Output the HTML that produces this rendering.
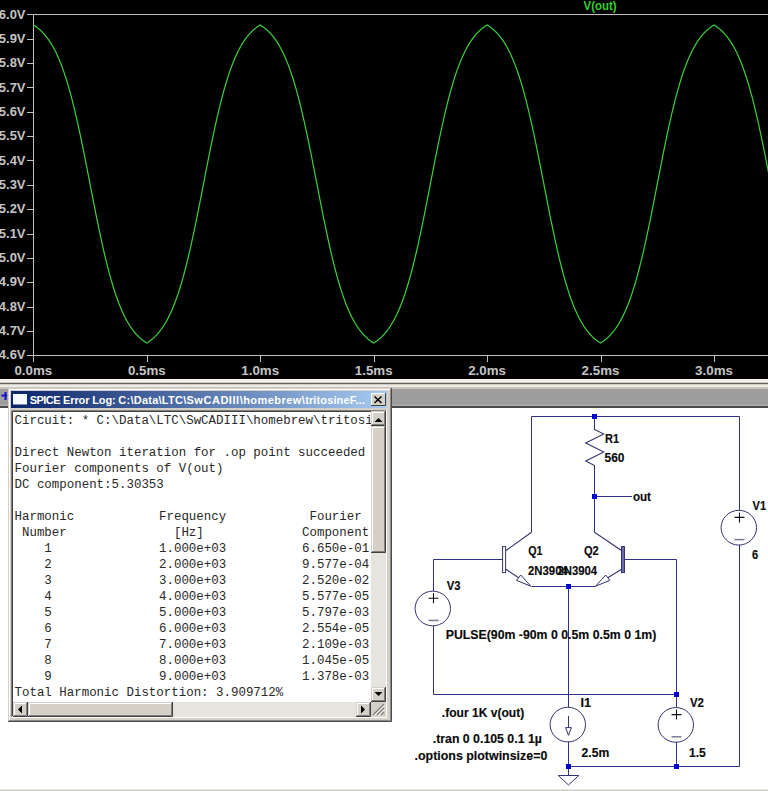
<!DOCTYPE html>
<html><head><meta charset="utf-8">
<style>
html,body{margin:0;padding:0;width:768px;height:791px;overflow:hidden;background:#fff;}
svg{position:absolute;left:0;top:0;}
.ax{font-family:"Liberation Sans",sans-serif;font-weight:bold;font-size:13.6px;fill:#c4c4c4;}
.vout{font-family:"Liberation Sans",sans-serif;font-weight:bold;font-size:13.5px;fill:#30d030;}
.sl{font-family:"Liberation Sans",sans-serif;font-weight:bold;font-size:12.5px;fill:#0a0a0a;stroke:#0a0a0a;stroke-width:0.15px;}
.tt{font-family:"Liberation Sans",sans-serif;font-weight:bold;font-size:11px;fill:#fff;}
.mono{font-family:"Liberation Mono",monospace;font-size:12.45px;fill:#282828;white-space:pre;}
</style></head><body>
<svg width="768" height="791" viewBox="0 0 768 791">
<rect x="0" y="0" width="768" height="379" fill="#000"/>
<path d="M33.5 14.5 H768 M33.5 14.5 V362 M27 355.5 H768" stroke="#c0c0c0" stroke-width="1" fill="none"/>
<path d="M27 14.5 H33" stroke="#c0c0c0" stroke-width="1"/>
<text transform="translate(25.5 18.5) scale(0.955 1)" text-anchor="end" class="ax">6.0V</text>
<path d="M27 39.5 H33" stroke="#c0c0c0" stroke-width="1"/>
<text transform="translate(25.5 42.9) scale(0.955 1)" text-anchor="end" class="ax">5.9V</text>
<path d="M27 63.5 H33" stroke="#c0c0c0" stroke-width="1"/>
<text transform="translate(25.5 67.2) scale(0.955 1)" text-anchor="end" class="ax">5.8V</text>
<path d="M27 87.5 H33" stroke="#c0c0c0" stroke-width="1"/>
<text transform="translate(25.5 91.6) scale(0.955 1)" text-anchor="end" class="ax">5.7V</text>
<path d="M27 112.5 H33" stroke="#c0c0c0" stroke-width="1"/>
<text transform="translate(25.5 115.9) scale(0.955 1)" text-anchor="end" class="ax">5.6V</text>
<path d="M27 136.5 H33" stroke="#c0c0c0" stroke-width="1"/>
<text transform="translate(25.5 140.2) scale(0.955 1)" text-anchor="end" class="ax">5.5V</text>
<path d="M27 160.5 H33" stroke="#c0c0c0" stroke-width="1"/>
<text transform="translate(25.5 164.6) scale(0.955 1)" text-anchor="end" class="ax">5.4V</text>
<path d="M27 185.5 H33" stroke="#c0c0c0" stroke-width="1"/>
<text transform="translate(25.5 188.9) scale(0.955 1)" text-anchor="end" class="ax">5.3V</text>
<path d="M27 209.5 H33" stroke="#c0c0c0" stroke-width="1"/>
<text transform="translate(25.5 213.3) scale(0.955 1)" text-anchor="end" class="ax">5.2V</text>
<path d="M27 234.5 H33" stroke="#c0c0c0" stroke-width="1"/>
<text transform="translate(25.5 237.6) scale(0.955 1)" text-anchor="end" class="ax">5.1V</text>
<path d="M27 258.5 H33" stroke="#c0c0c0" stroke-width="1"/>
<text transform="translate(25.5 262.0) scale(0.955 1)" text-anchor="end" class="ax">5.0V</text>
<path d="M27 282.5 H33" stroke="#c0c0c0" stroke-width="1"/>
<text transform="translate(25.5 286.3) scale(0.955 1)" text-anchor="end" class="ax">4.9V</text>
<path d="M27 307.5 H33" stroke="#c0c0c0" stroke-width="1"/>
<text transform="translate(25.5 310.6) scale(0.955 1)" text-anchor="end" class="ax">4.8V</text>
<path d="M27 331.5 H33" stroke="#c0c0c0" stroke-width="1"/>
<text transform="translate(25.5 335.0) scale(0.955 1)" text-anchor="end" class="ax">4.7V</text>
<path d="M27 355.5 H33" stroke="#c0c0c0" stroke-width="1"/>
<text transform="translate(25.5 359.3) scale(0.955 1)" text-anchor="end" class="ax">4.6V</text>
<path d="M33.5 355 V362" stroke="#c0c0c0" stroke-width="1"/>
<text transform="translate(33.3 374.6) scale(0.98 1)" text-anchor="middle" class="ax">0.0ms</text>
<path d="M147.5 355 V362" stroke="#c0c0c0" stroke-width="1"/>
<text transform="translate(146.8 374.6) scale(0.98 1)" text-anchor="middle" class="ax">0.5ms</text>
<path d="M260.5 355 V362" stroke="#c0c0c0" stroke-width="1"/>
<text transform="translate(260.2 374.6) scale(0.98 1)" text-anchor="middle" class="ax">1.0ms</text>
<path d="M374.5 355 V362" stroke="#c0c0c0" stroke-width="1"/>
<text transform="translate(373.7 374.6) scale(0.98 1)" text-anchor="middle" class="ax">1.5ms</text>
<path d="M487.5 355 V362" stroke="#c0c0c0" stroke-width="1"/>
<text transform="translate(487.1 374.6) scale(0.98 1)" text-anchor="middle" class="ax">2.0ms</text>
<path d="M601.5 355 V362" stroke="#c0c0c0" stroke-width="1"/>
<text transform="translate(600.5 374.6) scale(0.98 1)" text-anchor="middle" class="ax">2.5ms</text>
<path d="M714.5 355 V362" stroke="#c0c0c0" stroke-width="1"/>
<text transform="translate(714.0 374.6) scale(0.98 1)" text-anchor="middle" class="ax">3.0ms</text>
<path d="M33.30 24.92 L33.75 25.21 L34.21 25.50 L34.66 25.80 L35.12 26.10 L35.57 26.42 L36.02 26.74 L36.48 27.07 L36.93 27.41 L37.38 27.76 L37.84 28.11 L38.29 28.48 L38.75 28.85 L39.20 29.24 L39.65 29.63 L40.11 30.04 L40.56 30.45 L41.01 30.88 L41.47 31.32 L41.92 31.76 L42.38 32.22 L42.83 32.69 L43.28 33.17 L43.74 33.67 L44.19 34.17 L44.65 34.69 L45.10 35.22 L45.55 35.77 L46.01 36.33 L46.46 36.90 L46.91 37.48 L47.37 38.08 L47.82 38.69 L48.28 39.32 L48.73 39.96 L49.18 40.62 L49.64 41.30 L50.09 41.99 L50.54 42.69 L51.00 43.41 L51.45 44.15 L51.91 44.91 L52.36 45.68 L52.81 46.47 L53.27 47.28 L53.72 48.11 L54.17 48.95 L54.63 49.81 L55.08 50.70 L55.54 51.60 L55.99 52.52 L56.44 53.46 L56.90 54.42 L57.35 55.41 L57.81 56.41 L58.26 57.43 L58.71 58.48 L59.17 59.55 L59.62 60.64 L60.07 61.75 L60.53 62.88 L60.98 64.04 L61.44 65.21 L61.89 66.42 L62.34 67.64 L62.80 68.89 L63.25 70.16 L63.70 71.46 L64.16 72.77 L64.61 74.12 L65.07 75.49 L65.52 76.88 L65.97 78.29 L66.43 79.73 L66.88 81.20 L67.34 82.69 L67.79 84.21 L68.24 85.75 L68.70 87.31 L69.15 88.90 L69.60 90.51 L70.06 92.15 L70.51 93.82 L70.97 95.50 L71.42 97.22 L71.87 98.95 L72.33 100.71 L72.78 102.50 L73.23 104.31 L73.69 106.14 L74.14 108.00 L74.60 109.88 L75.05 111.78 L75.50 113.70 L75.96 115.65 L76.41 117.62 L76.86 119.60 L77.32 121.61 L77.77 123.65 L78.23 125.70 L78.68 127.77 L79.13 129.86 L79.59 131.96 L80.04 134.09 L80.50 136.23 L80.95 138.39 L81.40 140.57 L81.86 142.76 L82.31 144.96 L82.76 147.18 L83.22 149.42 L83.67 151.66 L84.13 153.92 L84.58 156.19 L85.03 158.47 L85.49 160.76 L85.94 163.05 L86.39 165.36 L86.85 167.67 L87.30 169.99 L87.76 172.31 L88.21 174.64 L88.66 176.97 L89.12 179.31 L89.57 181.64 L90.03 183.98 L90.48 186.31 L90.93 188.65 L91.39 190.98 L91.84 193.32 L92.29 195.64 L92.75 197.97 L93.20 200.28 L93.66 202.60 L94.11 204.90 L94.56 207.20 L95.02 209.49 L95.47 211.77 L95.92 214.04 L96.38 216.29 L96.83 218.54 L97.29 220.77 L97.74 222.99 L98.19 225.20 L98.65 227.39 L99.10 229.56 L99.55 231.72 L100.01 233.87 L100.46 235.99 L100.92 238.10 L101.37 240.19 L101.82 242.26 L102.28 244.31 L102.73 246.34 L103.19 248.35 L103.64 250.34 L104.09 252.31 L104.55 254.26 L105.00 256.18 L105.45 258.08 L105.91 259.96 L106.36 261.82 L106.82 263.65 L107.27 265.46 L107.72 267.24 L108.18 269.00 L108.63 270.74 L109.08 272.45 L109.54 274.14 L109.99 275.80 L110.45 277.44 L110.90 279.06 L111.35 280.65 L111.81 282.21 L112.26 283.75 L112.72 285.27 L113.17 286.76 L113.62 288.22 L114.08 289.66 L114.53 291.08 L114.98 292.47 L115.44 293.84 L115.89 295.18 L116.35 296.50 L116.80 297.80 L117.25 299.07 L117.71 300.32 L118.16 301.54 L118.61 302.74 L119.07 303.92 L119.52 305.08 L119.98 306.21 L120.43 307.32 L120.88 308.41 L121.34 309.48 L121.79 310.52 L122.24 311.55 L122.70 312.55 L123.15 313.53 L123.61 314.49 L124.06 315.43 L124.51 316.36 L124.97 317.26 L125.42 318.14 L125.88 319.01 L126.33 319.85 L126.78 320.68 L127.24 321.49 L127.69 322.28 L128.14 323.05 L128.60 323.80 L129.05 324.54 L129.51 325.27 L129.96 325.97 L130.41 326.66 L130.87 327.33 L131.32 327.99 L131.77 328.63 L132.23 329.26 L132.68 329.88 L133.14 330.47 L133.59 331.06 L134.04 331.63 L134.50 332.19 L134.95 332.73 L135.41 333.26 L135.86 333.78 L136.31 334.29 L136.77 334.78 L137.22 335.26 L137.67 335.73 L138.13 336.19 L138.58 336.64 L139.04 337.08 L139.49 337.50 L139.94 337.92 L140.40 338.32 L140.85 338.72 L141.30 339.10 L141.76 339.48 L142.21 339.84 L142.67 340.20 L143.12 340.55 L143.57 340.89 L144.03 341.22 L144.48 341.54 L144.93 341.85 L145.39 342.16 L145.84 342.46 L146.30 342.75 L146.75 343.03 L147.20 342.75 L147.66 342.46 L148.11 342.16 L148.57 341.85 L149.02 341.54 L149.47 341.22 L149.93 340.89 L150.38 340.55 L150.83 340.20 L151.29 339.84 L151.74 339.48 L152.20 339.10 L152.65 338.72 L153.10 338.32 L153.56 337.92 L154.01 337.50 L154.46 337.08 L154.92 336.64 L155.37 336.19 L155.83 335.73 L156.28 335.26 L156.73 334.78 L157.19 334.29 L157.64 333.78 L158.10 333.26 L158.55 332.73 L159.00 332.19 L159.46 331.63 L159.91 331.06 L160.36 330.47 L160.82 329.88 L161.27 329.26 L161.73 328.63 L162.18 327.99 L162.63 327.33 L163.09 326.66 L163.54 325.97 L163.99 325.27 L164.45 324.54 L164.90 323.80 L165.36 323.05 L165.81 322.28 L166.26 321.49 L166.72 320.68 L167.17 319.85 L167.62 319.01 L168.08 318.14 L168.53 317.26 L168.99 316.36 L169.44 315.43 L169.89 314.49 L170.35 313.53 L170.80 312.55 L171.26 311.55 L171.71 310.52 L172.16 309.48 L172.62 308.41 L173.07 307.32 L173.52 306.21 L173.98 305.08 L174.43 303.92 L174.89 302.74 L175.34 301.54 L175.79 300.32 L176.25 299.07 L176.70 297.80 L177.15 296.50 L177.61 295.18 L178.06 293.84 L178.52 292.47 L178.97 291.08 L179.42 289.66 L179.88 288.22 L180.33 286.76 L180.79 285.27 L181.24 283.75 L181.69 282.21 L182.15 280.65 L182.60 279.06 L183.05 277.44 L183.51 275.80 L183.96 274.14 L184.42 272.45 L184.87 270.74 L185.32 269.00 L185.78 267.24 L186.23 265.46 L186.68 263.65 L187.14 261.82 L187.59 259.96 L188.05 258.08 L188.50 256.18 L188.95 254.26 L189.41 252.31 L189.86 250.34 L190.31 248.35 L190.77 246.34 L191.22 244.31 L191.68 242.26 L192.13 240.19 L192.58 238.10 L193.04 235.99 L193.49 233.87 L193.95 231.72 L194.40 229.56 L194.85 227.39 L195.31 225.20 L195.76 222.99 L196.21 220.77 L196.67 218.54 L197.12 216.29 L197.58 214.04 L198.03 211.77 L198.48 209.49 L198.94 207.20 L199.39 204.90 L199.84 202.60 L200.30 200.28 L200.75 197.97 L201.21 195.64 L201.66 193.32 L202.11 190.98 L202.57 188.65 L203.02 186.31 L203.48 183.98 L203.93 181.64 L204.38 179.31 L204.84 176.97 L205.29 174.64 L205.74 172.31 L206.20 169.99 L206.65 167.67 L207.11 165.36 L207.56 163.05 L208.01 160.76 L208.47 158.47 L208.92 156.19 L209.37 153.92 L209.83 151.66 L210.28 149.42 L210.74 147.18 L211.19 144.96 L211.64 142.76 L212.10 140.57 L212.55 138.39 L213.00 136.23 L213.46 134.09 L213.91 131.96 L214.37 129.86 L214.82 127.77 L215.27 125.70 L215.73 123.65 L216.18 121.61 L216.64 119.60 L217.09 117.62 L217.54 115.65 L218.00 113.70 L218.45 111.78 L218.90 109.88 L219.36 108.00 L219.81 106.14 L220.27 104.31 L220.72 102.50 L221.17 100.71 L221.63 98.95 L222.08 97.22 L222.53 95.50 L222.99 93.82 L223.44 92.15 L223.90 90.51 L224.35 88.90 L224.80 87.31 L225.26 85.75 L225.71 84.21 L226.17 82.69 L226.62 81.20 L227.07 79.73 L227.53 78.29 L227.98 76.88 L228.43 75.49 L228.89 74.12 L229.34 72.77 L229.80 71.46 L230.25 70.16 L230.70 68.89 L231.16 67.64 L231.61 66.42 L232.06 65.21 L232.52 64.04 L232.97 62.88 L233.43 61.75 L233.88 60.64 L234.33 59.55 L234.79 58.48 L235.24 57.43 L235.69 56.41 L236.15 55.41 L236.60 54.42 L237.06 53.46 L237.51 52.52 L237.96 51.60 L238.42 50.70 L238.87 49.81 L239.33 48.95 L239.78 48.11 L240.23 47.28 L240.69 46.47 L241.14 45.68 L241.59 44.91 L242.05 44.15 L242.50 43.41 L242.96 42.69 L243.41 41.99 L243.86 41.30 L244.32 40.62 L244.77 39.96 L245.22 39.32 L245.68 38.69 L246.13 38.08 L246.59 37.48 L247.04 36.90 L247.49 36.33 L247.95 35.77 L248.40 35.22 L248.86 34.69 L249.31 34.17 L249.76 33.67 L250.22 33.17 L250.67 32.69 L251.12 32.22 L251.58 31.76 L252.03 31.32 L252.49 30.88 L252.94 30.45 L253.39 30.04 L253.85 29.63 L254.30 29.24 L254.75 28.85 L255.21 28.48 L255.66 28.11 L256.12 27.76 L256.57 27.41 L257.02 27.07 L257.48 26.74 L257.93 26.42 L258.38 26.10 L258.84 25.80 L259.29 25.50 L259.75 25.21 L260.20 24.92 L260.65 25.21 L261.11 25.50 L261.56 25.80 L262.02 26.10 L262.47 26.42 L262.92 26.74 L263.38 27.07 L263.83 27.41 L264.28 27.76 L264.74 28.11 L265.19 28.48 L265.65 28.85 L266.10 29.24 L266.55 29.63 L267.01 30.04 L267.46 30.45 L267.91 30.88 L268.37 31.32 L268.82 31.76 L269.28 32.22 L269.73 32.69 L270.18 33.17 L270.64 33.67 L271.09 34.17 L271.55 34.69 L272.00 35.22 L272.45 35.77 L272.91 36.33 L273.36 36.90 L273.81 37.48 L274.27 38.08 L274.72 38.69 L275.18 39.32 L275.63 39.96 L276.08 40.62 L276.54 41.30 L276.99 41.99 L277.44 42.69 L277.90 43.41 L278.35 44.15 L278.81 44.91 L279.26 45.68 L279.71 46.47 L280.17 47.28 L280.62 48.11 L281.07 48.95 L281.53 49.81 L281.98 50.70 L282.44 51.60 L282.89 52.52 L283.34 53.46 L283.80 54.42 L284.25 55.41 L284.71 56.41 L285.16 57.43 L285.61 58.48 L286.07 59.55 L286.52 60.64 L286.97 61.75 L287.43 62.88 L287.88 64.04 L288.34 65.21 L288.79 66.42 L289.24 67.64 L289.70 68.89 L290.15 70.16 L290.60 71.46 L291.06 72.77 L291.51 74.12 L291.97 75.49 L292.42 76.88 L292.87 78.29 L293.33 79.73 L293.78 81.20 L294.24 82.69 L294.69 84.21 L295.14 85.75 L295.60 87.31 L296.05 88.90 L296.50 90.51 L296.96 92.15 L297.41 93.82 L297.87 95.50 L298.32 97.22 L298.77 98.95 L299.23 100.71 L299.68 102.50 L300.13 104.31 L300.59 106.14 L301.04 108.00 L301.50 109.88 L301.95 111.78 L302.40 113.70 L302.86 115.65 L303.31 117.62 L303.76 119.60 L304.22 121.61 L304.67 123.65 L305.13 125.70 L305.58 127.77 L306.03 129.86 L306.49 131.96 L306.94 134.09 L307.40 136.23 L307.85 138.39 L308.30 140.57 L308.76 142.76 L309.21 144.96 L309.66 147.18 L310.12 149.42 L310.57 151.66 L311.03 153.92 L311.48 156.19 L311.93 158.47 L312.39 160.76 L312.84 163.05 L313.29 165.36 L313.75 167.67 L314.20 169.99 L314.66 172.31 L315.11 174.64 L315.56 176.97 L316.02 179.31 L316.47 181.64 L316.93 183.98 L317.38 186.31 L317.83 188.65 L318.29 190.98 L318.74 193.32 L319.19 195.64 L319.65 197.97 L320.10 200.28 L320.56 202.60 L321.01 204.90 L321.46 207.20 L321.92 209.49 L322.37 211.77 L322.82 214.04 L323.28 216.29 L323.73 218.54 L324.19 220.77 L324.64 222.99 L325.09 225.20 L325.55 227.39 L326.00 229.56 L326.45 231.72 L326.91 233.87 L327.36 235.99 L327.82 238.10 L328.27 240.19 L328.72 242.26 L329.18 244.31 L329.63 246.34 L330.09 248.35 L330.54 250.34 L330.99 252.31 L331.45 254.26 L331.90 256.18 L332.35 258.08 L332.81 259.96 L333.26 261.82 L333.72 263.65 L334.17 265.46 L334.62 267.24 L335.08 269.00 L335.53 270.74 L335.98 272.45 L336.44 274.14 L336.89 275.80 L337.35 277.44 L337.80 279.06 L338.25 280.65 L338.71 282.21 L339.16 283.75 L339.62 285.27 L340.07 286.76 L340.52 288.22 L340.98 289.66 L341.43 291.08 L341.88 292.47 L342.34 293.84 L342.79 295.18 L343.25 296.50 L343.70 297.80 L344.15 299.07 L344.61 300.32 L345.06 301.54 L345.51 302.74 L345.97 303.92 L346.42 305.08 L346.88 306.21 L347.33 307.32 L347.78 308.41 L348.24 309.48 L348.69 310.52 L349.14 311.55 L349.60 312.55 L350.05 313.53 L350.51 314.49 L350.96 315.43 L351.41 316.36 L351.87 317.26 L352.32 318.14 L352.78 319.01 L353.23 319.85 L353.68 320.68 L354.14 321.49 L354.59 322.28 L355.04 323.05 L355.50 323.80 L355.95 324.54 L356.41 325.27 L356.86 325.97 L357.31 326.66 L357.77 327.33 L358.22 327.99 L358.67 328.63 L359.13 329.26 L359.58 329.88 L360.04 330.47 L360.49 331.06 L360.94 331.63 L361.40 332.19 L361.85 332.73 L362.31 333.26 L362.76 333.78 L363.21 334.29 L363.67 334.78 L364.12 335.26 L364.57 335.73 L365.03 336.19 L365.48 336.64 L365.94 337.08 L366.39 337.50 L366.84 337.92 L367.30 338.32 L367.75 338.72 L368.20 339.10 L368.66 339.48 L369.11 339.84 L369.57 340.20 L370.02 340.55 L370.47 340.89 L370.93 341.22 L371.38 341.54 L371.83 341.85 L372.29 342.16 L372.74 342.46 L373.20 342.75 L373.65 343.03 L374.10 342.75 L374.56 342.46 L375.01 342.16 L375.47 341.85 L375.92 341.54 L376.37 341.22 L376.83 340.89 L377.28 340.55 L377.73 340.20 L378.19 339.84 L378.64 339.48 L379.10 339.10 L379.55 338.72 L380.00 338.32 L380.46 337.92 L380.91 337.50 L381.36 337.08 L381.82 336.64 L382.27 336.19 L382.73 335.73 L383.18 335.26 L383.63 334.78 L384.09 334.29 L384.54 333.78 L385.00 333.26 L385.45 332.73 L385.90 332.19 L386.36 331.63 L386.81 331.06 L387.26 330.47 L387.72 329.88 L388.17 329.26 L388.63 328.63 L389.08 327.99 L389.53 327.33 L389.99 326.66 L390.44 325.97 L390.89 325.27 L391.35 324.54 L391.80 323.80 L392.26 323.05 L392.71 322.28 L393.16 321.49 L393.62 320.68 L394.07 319.85 L394.52 319.01 L394.98 318.14 L395.43 317.26 L395.89 316.36 L396.34 315.43 L396.79 314.49 L397.25 313.53 L397.70 312.55 L398.16 311.55 L398.61 310.52 L399.06 309.48 L399.52 308.41 L399.97 307.32 L400.42 306.21 L400.88 305.08 L401.33 303.92 L401.79 302.74 L402.24 301.54 L402.69 300.32 L403.15 299.07 L403.60 297.80 L404.05 296.50 L404.51 295.18 L404.96 293.84 L405.42 292.47 L405.87 291.08 L406.32 289.66 L406.78 288.22 L407.23 286.76 L407.69 285.27 L408.14 283.75 L408.59 282.21 L409.05 280.65 L409.50 279.06 L409.95 277.44 L410.41 275.80 L410.86 274.14 L411.32 272.45 L411.77 270.74 L412.22 269.00 L412.68 267.24 L413.13 265.46 L413.58 263.65 L414.04 261.82 L414.49 259.96 L414.95 258.08 L415.40 256.18 L415.85 254.26 L416.31 252.31 L416.76 250.34 L417.21 248.35 L417.67 246.34 L418.12 244.31 L418.58 242.26 L419.03 240.19 L419.48 238.10 L419.94 235.99 L420.39 233.87 L420.85 231.72 L421.30 229.56 L421.75 227.39 L422.21 225.20 L422.66 222.99 L423.11 220.77 L423.57 218.54 L424.02 216.29 L424.48 214.04 L424.93 211.77 L425.38 209.49 L425.84 207.20 L426.29 204.90 L426.74 202.60 L427.20 200.28 L427.65 197.97 L428.11 195.64 L428.56 193.32 L429.01 190.98 L429.47 188.65 L429.92 186.31 L430.38 183.98 L430.83 181.64 L431.28 179.31 L431.74 176.97 L432.19 174.64 L432.64 172.31 L433.10 169.99 L433.55 167.67 L434.01 165.36 L434.46 163.05 L434.91 160.76 L435.37 158.47 L435.82 156.19 L436.27 153.92 L436.73 151.66 L437.18 149.42 L437.64 147.18 L438.09 144.96 L438.54 142.76 L439.00 140.57 L439.45 138.39 L439.90 136.23 L440.36 134.09 L440.81 131.96 L441.27 129.86 L441.72 127.77 L442.17 125.70 L442.63 123.65 L443.08 121.61 L443.54 119.60 L443.99 117.62 L444.44 115.65 L444.90 113.70 L445.35 111.78 L445.80 109.88 L446.26 108.00 L446.71 106.14 L447.17 104.31 L447.62 102.50 L448.07 100.71 L448.53 98.95 L448.98 97.22 L449.43 95.50 L449.89 93.82 L450.34 92.15 L450.80 90.51 L451.25 88.90 L451.70 87.31 L452.16 85.75 L452.61 84.21 L453.07 82.69 L453.52 81.20 L453.97 79.73 L454.43 78.29 L454.88 76.88 L455.33 75.49 L455.79 74.12 L456.24 72.77 L456.70 71.46 L457.15 70.16 L457.60 68.89 L458.06 67.64 L458.51 66.42 L458.96 65.21 L459.42 64.04 L459.87 62.88 L460.33 61.75 L460.78 60.64 L461.23 59.55 L461.69 58.48 L462.14 57.43 L462.59 56.41 L463.05 55.41 L463.50 54.42 L463.96 53.46 L464.41 52.52 L464.86 51.60 L465.32 50.70 L465.77 49.81 L466.23 48.95 L466.68 48.11 L467.13 47.28 L467.59 46.47 L468.04 45.68 L468.49 44.91 L468.95 44.15 L469.40 43.41 L469.86 42.69 L470.31 41.99 L470.76 41.30 L471.22 40.62 L471.67 39.96 L472.12 39.32 L472.58 38.69 L473.03 38.08 L473.49 37.48 L473.94 36.90 L474.39 36.33 L474.85 35.77 L475.30 35.22 L475.76 34.69 L476.21 34.17 L476.66 33.67 L477.12 33.17 L477.57 32.69 L478.02 32.22 L478.48 31.76 L478.93 31.32 L479.39 30.88 L479.84 30.45 L480.29 30.04 L480.75 29.63 L481.20 29.24 L481.65 28.85 L482.11 28.48 L482.56 28.11 L483.02 27.76 L483.47 27.41 L483.92 27.07 L484.38 26.74 L484.83 26.42 L485.28 26.10 L485.74 25.80 L486.19 25.50 L486.65 25.21 L487.10 24.92 L487.55 25.21 L488.01 25.50 L488.46 25.80 L488.92 26.10 L489.37 26.42 L489.82 26.74 L490.28 27.07 L490.73 27.41 L491.18 27.76 L491.64 28.11 L492.09 28.48 L492.55 28.85 L493.00 29.24 L493.45 29.63 L493.91 30.04 L494.36 30.45 L494.81 30.88 L495.27 31.32 L495.72 31.76 L496.18 32.22 L496.63 32.69 L497.08 33.17 L497.54 33.67 L497.99 34.17 L498.44 34.69 L498.90 35.22 L499.35 35.77 L499.81 36.33 L500.26 36.90 L500.71 37.48 L501.17 38.08 L501.62 38.69 L502.08 39.32 L502.53 39.96 L502.98 40.62 L503.44 41.30 L503.89 41.99 L504.34 42.69 L504.80 43.41 L505.25 44.15 L505.71 44.91 L506.16 45.68 L506.61 46.47 L507.07 47.28 L507.52 48.11 L507.97 48.95 L508.43 49.81 L508.88 50.70 L509.34 51.60 L509.79 52.52 L510.24 53.46 L510.70 54.42 L511.15 55.41 L511.61 56.41 L512.06 57.43 L512.51 58.48 L512.97 59.55 L513.42 60.64 L513.87 61.75 L514.33 62.88 L514.78 64.04 L515.24 65.21 L515.69 66.42 L516.14 67.64 L516.60 68.89 L517.05 70.16 L517.50 71.46 L517.96 72.77 L518.41 74.12 L518.87 75.49 L519.32 76.88 L519.77 78.29 L520.23 79.73 L520.68 81.20 L521.13 82.69 L521.59 84.21 L522.04 85.75 L522.50 87.31 L522.95 88.90 L523.40 90.51 L523.86 92.15 L524.31 93.82 L524.77 95.50 L525.22 97.22 L525.67 98.95 L526.13 100.71 L526.58 102.50 L527.03 104.31 L527.49 106.14 L527.94 108.00 L528.40 109.88 L528.85 111.78 L529.30 113.70 L529.76 115.65 L530.21 117.62 L530.66 119.60 L531.12 121.61 L531.57 123.65 L532.03 125.70 L532.48 127.77 L532.93 129.86 L533.39 131.96 L533.84 134.09 L534.30 136.23 L534.75 138.39 L535.20 140.57 L535.66 142.76 L536.11 144.96 L536.56 147.18 L537.02 149.42 L537.47 151.66 L537.93 153.92 L538.38 156.19 L538.83 158.47 L539.29 160.76 L539.74 163.05 L540.19 165.36 L540.65 167.67 L541.10 169.99 L541.56 172.31 L542.01 174.64 L542.46 176.97 L542.92 179.31 L543.37 181.64 L543.82 183.98 L544.28 186.31 L544.73 188.65 L545.19 190.98 L545.64 193.32 L546.09 195.64 L546.55 197.97 L547.00 200.28 L547.46 202.60 L547.91 204.90 L548.36 207.20 L548.82 209.49 L549.27 211.77 L549.72 214.04 L550.18 216.29 L550.63 218.54 L551.09 220.77 L551.54 222.99 L551.99 225.20 L552.45 227.39 L552.90 229.56 L553.35 231.72 L553.81 233.87 L554.26 235.99 L554.72 238.10 L555.17 240.19 L555.62 242.26 L556.08 244.31 L556.53 246.34 L556.99 248.35 L557.44 250.34 L557.89 252.31 L558.35 254.26 L558.80 256.18 L559.25 258.08 L559.71 259.96 L560.16 261.82 L560.62 263.65 L561.07 265.46 L561.52 267.24 L561.98 269.00 L562.43 270.74 L562.88 272.45 L563.34 274.14 L563.79 275.80 L564.25 277.44 L564.70 279.06 L565.15 280.65 L565.61 282.21 L566.06 283.75 L566.51 285.27 L566.97 286.76 L567.42 288.22 L567.88 289.66 L568.33 291.08 L568.78 292.47 L569.24 293.84 L569.69 295.18 L570.15 296.50 L570.60 297.80 L571.05 299.07 L571.51 300.32 L571.96 301.54 L572.41 302.74 L572.87 303.92 L573.32 305.08 L573.78 306.21 L574.23 307.32 L574.68 308.41 L575.14 309.48 L575.59 310.52 L576.04 311.55 L576.50 312.55 L576.95 313.53 L577.41 314.49 L577.86 315.43 L578.31 316.36 L578.77 317.26 L579.22 318.14 L579.68 319.01 L580.13 319.85 L580.58 320.68 L581.04 321.49 L581.49 322.28 L581.94 323.05 L582.40 323.80 L582.85 324.54 L583.31 325.27 L583.76 325.97 L584.21 326.66 L584.67 327.33 L585.12 327.99 L585.57 328.63 L586.03 329.26 L586.48 329.88 L586.94 330.47 L587.39 331.06 L587.84 331.63 L588.30 332.19 L588.75 332.73 L589.20 333.26 L589.66 333.78 L590.11 334.29 L590.57 334.78 L591.02 335.26 L591.47 335.73 L591.93 336.19 L592.38 336.64 L592.84 337.08 L593.29 337.50 L593.74 337.92 L594.20 338.32 L594.65 338.72 L595.10 339.10 L595.56 339.48 L596.01 339.84 L596.47 340.20 L596.92 340.55 L597.37 340.89 L597.83 341.22 L598.28 341.54 L598.73 341.85 L599.19 342.16 L599.64 342.46 L600.10 342.75 L600.55 343.03 L601.00 342.75 L601.46 342.46 L601.91 342.16 L602.37 341.85 L602.82 341.54 L603.27 341.22 L603.73 340.89 L604.18 340.55 L604.63 340.20 L605.09 339.84 L605.54 339.48 L606.00 339.10 L606.45 338.72 L606.90 338.32 L607.36 337.92 L607.81 337.50 L608.26 337.08 L608.72 336.64 L609.17 336.19 L609.63 335.73 L610.08 335.26 L610.53 334.78 L610.99 334.29 L611.44 333.78 L611.89 333.26 L612.35 332.73 L612.80 332.19 L613.26 331.63 L613.71 331.06 L614.16 330.47 L614.62 329.88 L615.07 329.26 L615.53 328.63 L615.98 327.99 L616.43 327.33 L616.89 326.66 L617.34 325.97 L617.79 325.27 L618.25 324.54 L618.70 323.80 L619.16 323.05 L619.61 322.28 L620.06 321.49 L620.52 320.68 L620.97 319.85 L621.42 319.01 L621.88 318.14 L622.33 317.26 L622.79 316.36 L623.24 315.43 L623.69 314.49 L624.15 313.53 L624.60 312.55 L625.06 311.55 L625.51 310.52 L625.96 309.48 L626.42 308.41 L626.87 307.32 L627.32 306.21 L627.78 305.08 L628.23 303.92 L628.69 302.74 L629.14 301.54 L629.59 300.32 L630.05 299.07 L630.50 297.80 L630.95 296.50 L631.41 295.18 L631.86 293.84 L632.32 292.47 L632.77 291.08 L633.22 289.66 L633.68 288.22 L634.13 286.76 L634.58 285.27 L635.04 283.75 L635.49 282.21 L635.95 280.65 L636.40 279.06 L636.85 277.44 L637.31 275.80 L637.76 274.14 L638.22 272.45 L638.67 270.74 L639.12 269.00 L639.58 267.24 L640.03 265.46 L640.48 263.65 L640.94 261.82 L641.39 259.96 L641.85 258.08 L642.30 256.18 L642.75 254.26 L643.21 252.31 L643.66 250.34 L644.11 248.35 L644.57 246.34 L645.02 244.31 L645.48 242.26 L645.93 240.19 L646.38 238.10 L646.84 235.99 L647.29 233.87 L647.75 231.72 L648.20 229.56 L648.65 227.39 L649.11 225.20 L649.56 222.99 L650.01 220.77 L650.47 218.54 L650.92 216.29 L651.38 214.04 L651.83 211.77 L652.28 209.49 L652.74 207.20 L653.19 204.90 L653.64 202.60 L654.10 200.28 L654.55 197.97 L655.01 195.64 L655.46 193.32 L655.91 190.98 L656.37 188.65 L656.82 186.31 L657.27 183.98 L657.73 181.64 L658.18 179.31 L658.64 176.97 L659.09 174.64 L659.54 172.31 L660.00 169.99 L660.45 167.67 L660.91 165.36 L661.36 163.05 L661.81 160.76 L662.27 158.47 L662.72 156.19 L663.17 153.92 L663.63 151.66 L664.08 149.42 L664.54 147.18 L664.99 144.96 L665.44 142.76 L665.90 140.57 L666.35 138.39 L666.80 136.23 L667.26 134.09 L667.71 131.96 L668.17 129.86 L668.62 127.77 L669.07 125.70 L669.53 123.65 L669.98 121.61 L670.44 119.60 L670.89 117.62 L671.34 115.65 L671.80 113.70 L672.25 111.78 L672.70 109.88 L673.16 108.00 L673.61 106.14 L674.07 104.31 L674.52 102.50 L674.97 100.71 L675.43 98.95 L675.88 97.22 L676.33 95.50 L676.79 93.82 L677.24 92.15 L677.70 90.51 L678.15 88.90 L678.60 87.31 L679.06 85.75 L679.51 84.21 L679.96 82.69 L680.42 81.20 L680.87 79.73 L681.33 78.29 L681.78 76.88 L682.23 75.49 L682.69 74.12 L683.14 72.77 L683.60 71.46 L684.05 70.16 L684.50 68.89 L684.96 67.64 L685.41 66.42 L685.86 65.21 L686.32 64.04 L686.77 62.88 L687.23 61.75 L687.68 60.64 L688.13 59.55 L688.59 58.48 L689.04 57.43 L689.49 56.41 L689.95 55.41 L690.40 54.42 L690.86 53.46 L691.31 52.52 L691.76 51.60 L692.22 50.70 L692.67 49.81 L693.13 48.95 L693.58 48.11 L694.03 47.28 L694.49 46.47 L694.94 45.68 L695.39 44.91 L695.85 44.15 L696.30 43.41 L696.76 42.69 L697.21 41.99 L697.66 41.30 L698.12 40.62 L698.57 39.96 L699.02 39.32 L699.48 38.69 L699.93 38.08 L700.39 37.48 L700.84 36.90 L701.29 36.33 L701.75 35.77 L702.20 35.22 L702.65 34.69 L703.11 34.17 L703.56 33.67 L704.02 33.17 L704.47 32.69 L704.92 32.22 L705.38 31.76 L705.83 31.32 L706.29 30.88 L706.74 30.45 L707.19 30.04 L707.65 29.63 L708.10 29.24 L708.55 28.85 L709.01 28.48 L709.46 28.11 L709.92 27.76 L710.37 27.41 L710.82 27.07 L711.28 26.74 L711.73 26.42 L712.18 26.10 L712.64 25.80 L713.09 25.50 L713.55 25.21 L714.00 24.92 L714.45 25.21 L714.91 25.50 L715.36 25.80 L715.82 26.10 L716.27 26.42 L716.72 26.74 L717.18 27.07 L717.63 27.41 L718.08 27.76 L718.54 28.11 L718.99 28.48 L719.45 28.85 L719.90 29.24 L720.35 29.63 L720.81 30.04 L721.26 30.45 L721.71 30.88 L722.17 31.32 L722.62 31.76 L723.08 32.22 L723.53 32.69 L723.98 33.17 L724.44 33.67 L724.89 34.17 L725.34 34.69 L725.80 35.22 L726.25 35.77 L726.71 36.33 L727.16 36.90 L727.61 37.48 L728.07 38.08 L728.52 38.69 L728.98 39.32 L729.43 39.96 L729.88 40.62 L730.34 41.30 L730.79 41.99 L731.24 42.69 L731.70 43.41 L732.15 44.15 L732.61 44.91 L733.06 45.68 L733.51 46.47 L733.97 47.28 L734.42 48.11 L734.87 48.95 L735.33 49.81 L735.78 50.70 L736.24 51.60 L736.69 52.52 L737.14 53.46 L737.60 54.42 L738.05 55.41 L738.51 56.41 L738.96 57.43 L739.41 58.48 L739.87 59.55 L740.32 60.64 L740.77 61.75 L741.23 62.88 L741.68 64.04 L742.14 65.21 L742.59 66.42 L743.04 67.64 L743.50 68.89 L743.95 70.16 L744.40 71.46 L744.86 72.77 L745.31 74.12 L745.77 75.49 L746.22 76.88 L746.67 78.29 L747.13 79.73 L747.58 81.20 L748.03 82.69 L748.49 84.21 L748.94 85.75 L749.40 87.31 L749.85 88.90 L750.30 90.51 L750.76 92.15 L751.21 93.82 L751.67 95.50 L752.12 97.22 L752.57 98.95 L753.03 100.71 L753.48 102.50 L753.93 104.31 L754.39 106.14 L754.84 108.00 L755.30 109.88 L755.75 111.78 L756.20 113.70 L756.66 115.65 L757.11 117.62 L757.56 119.60 L758.02 121.61 L758.47 123.65 L758.93 125.70 L759.38 127.77 L759.83 129.86 L760.29 131.96 L760.74 134.09 L761.20 136.23 L761.65 138.39 L762.10 140.57 L762.56 142.76 L763.01 144.96 L763.46 147.18 L763.92 149.42 L764.37 151.66 L764.83 153.92 L765.28 156.19 L765.73 158.47 L766.19 160.76 L766.64 163.05 L767.09 165.36 L767.55 167.67 L768.00 169.99 L768.46 172.31 L768.91 174.64 L769.36 176.97 L769.82 179.31" stroke="#3ad23a" stroke-width="1.2" fill="none"/>
<text transform="translate(583.5 9.7) scale(0.85 1)" class="vout">V(out)</text>
<rect x="0" y="379" width="768" height="3" fill="#f2f0ea"/>
<rect x="0" y="382" width="768" height="1" fill="#cfcbc3"/>
<rect x="0" y="383" width="768" height="1.5" fill="#66625c"/>
<rect x="0" y="384.5" width="768" height="2.5" fill="#eeeae4"/>
<rect x="0" y="387" width="768" height="2" fill="#c8c4bc"/>
<rect x="0" y="389" width="768" height="16" fill="#9e9e9e"/>
<rect x="0" y="405" width="768" height="1" fill="#b4b4b4"/>
<rect x="0" y="406" width="768" height="2" fill="#4a4a4a"/>
<rect x="0" y="789.5" width="768" height="1.5" fill="#cfcdc5"/>
<path d="M1.5 395.5 H7 M5.5 392 V400" stroke="#1010d0" stroke-width="2"/>
<path d="M531.5 532.3 L531.5 416.5 L739.5 416.5 L739.5 510.4" stroke="#30308a" stroke-width="1" fill="none"/>
<path d="M739.5 545 L739.5 766.5 L568.5 766.5 L568.5 775.4" stroke="#30308a" stroke-width="1" fill="none"/>
<path d="M594.5 416.5 L594.5 425" stroke="#30308a" stroke-width="1" fill="none"/>
<path d="M594.5 470 L594.5 532.3" stroke="#30308a" stroke-width="1" fill="none"/>
<path d="M594.5 496.5 L632 496.5" stroke="#30308a" stroke-width="1" fill="none"/>
<path d="M531.5 586.5 L595.5 586.5" stroke="#30308a" stroke-width="1" fill="none"/>
<path d="M568.5 586.5 L568.5 707.2" stroke="#30308a" stroke-width="1" fill="none"/>
<path d="M568.5 741.8 L568.5 766.5" stroke="#30308a" stroke-width="1" fill="none"/>
<path d="M502.5 559.5 L433.5 559.5 L433.5 591" stroke="#30308a" stroke-width="1" fill="none"/>
<path d="M433.5 626 L433.5 694.5 L676.5 694.5" stroke="#30308a" stroke-width="1" fill="none"/>
<path d="M624.2 559.5 L676.5 559.5 L676.5 707.6" stroke="#30308a" stroke-width="1" fill="none"/>
<path d="M676.5 742.2 L676.5 766.5" stroke="#30308a" stroke-width="1" fill="none"/>
<path d="M594.5 425 L594.5 429.5 L603.7 434 L585.7 443 L603.7 452 L585.7 461 L594.5 465.5 L594.5 470" stroke="#34346e" stroke-width="1.1" fill="none"/>
<path d="M531.5 532.3 L506 550.5" stroke="#34346e" stroke-width="1.1" fill="none"/>
<path d="M506 569.3 L518.6 577.7" stroke="#34346e" stroke-width="1.1" fill="none"/>
<rect x="502.6" y="546.6" width="3" height="26" fill="none" stroke="#34346e" stroke-width="1"/>
<path d="M530.8 586.2 L516.6 580.4 L520.7 575 Z" fill="none" stroke="#34346e" stroke-width="1"/>
<path d="M594.5 532.3 L621.5 550.5" stroke="#34346e" stroke-width="1.1" fill="none"/>
<path d="M621.5 569.3 L607.8 577.7" stroke="#34346e" stroke-width="1.1" fill="none"/>
<rect x="621.5" y="546.6" width="3" height="26" fill="#6a6ab0" stroke="#34346e" stroke-width="1"/>
<path d="M595.6 586.2 L609.8 580.4 L605.7 575 Z" fill="none" stroke="#34346e" stroke-width="1"/>
<ellipse cx="738.8" cy="527.7" rx="17.7" ry="17.35" fill="none" stroke="#34346e" stroke-width="1"/>
<path d="M734.5 517.4000000000001 H744.5 M739.5 512.4000000000001 V522.4000000000001" stroke="#101018" stroke-width="1.1"/>
<path d="M734.5 539.6 H744.5" stroke="#7a7a98" stroke-width="1.5"/>
<ellipse cx="432.8" cy="608.5" rx="17.7" ry="17.35" fill="none" stroke="#34346e" stroke-width="1"/>
<path d="M428.5 598.2 H438.5 M433.5 593.2 V603.2" stroke="#101018" stroke-width="1.1"/>
<path d="M428.5 620.4 H438.5" stroke="#7a7a98" stroke-width="1.5"/>
<ellipse cx="675.8" cy="724.9" rx="17.7" ry="17.35" fill="none" stroke="#34346e" stroke-width="1"/>
<path d="M671.5 714.6 H681.5 M676.5 709.6 V719.6" stroke="#101018" stroke-width="1.1"/>
<path d="M671.5 736.8 H681.5" stroke="#7a7a98" stroke-width="1.5"/>
<ellipse cx="567.8" cy="724.6" rx="17.7" ry="17.35" fill="none" stroke="#34346e" stroke-width="1"/>
<path d="M568.5 716 V727.6 M565.6 727.6 L571.4 727.6 L568.5 735.3 Z" fill="none" stroke="#34346e" stroke-width="1"/>
<path d="M558.3 775.5 H578.7 L568.5 785 Z" fill="none" stroke="#34346e" stroke-width="1"/>
<rect x="592.0" y="414.0" width="5" height="5" fill="#0000d0"/>
<rect x="592.0" y="494.0" width="5" height="5" fill="#0000d0"/>
<rect x="566.0" y="584.0" width="5" height="5" fill="#0000d0"/>
<rect x="674.0" y="692.0" width="5" height="5" fill="#0000d0"/>
<rect x="566.0" y="764.0" width="5" height="5" fill="#0000d0"/>
<rect x="674.0" y="764.0" width="5" height="5" fill="#0000d0"/>
<text transform="translate(605.02 442.5) scale(0.88 1)" class="sl" xml:space="preserve">R1</text>
<text transform="translate(604.54 462.3) scale(0.955 1)" class="sl" xml:space="preserve">560</text>
<text transform="translate(632.9 501.2) scale(0.9316 1)" class="sl" xml:space="preserve">out</text>
<text transform="translate(528.2 555.3) scale(0.8559 1)" class="sl" xml:space="preserve">Q1</text>
<text transform="translate(583.9 555.3) scale(0.8938 1)" class="sl" xml:space="preserve">Q2</text>
<text transform="translate(528.0 574.6) scale(0.9091 1)" class="sl" xml:space="preserve">2N3904</text>
<text transform="translate(557.4 574.6) scale(0.9091 1)" class="sl" xml:space="preserve">2N3904</text>
<text transform="translate(752.5 510.3) scale(0.8867 1)" class="sl" xml:space="preserve">V1</text>
<text transform="translate(752.1 558.5) scale(0.8857 1)" class="sl" xml:space="preserve">6</text>
<text transform="translate(446.8 590.4) scale(0.9 1)" class="sl" xml:space="preserve">V3</text>
<text transform="translate(445.71 639.3) scale(0.9854 1)" class="sl" xml:space="preserve">PULSE(90m -90m 0 0.5m 0.5m 0 1m)</text>
<text transform="translate(580.49 707.3) scale(1.0111 1)" class="sl" xml:space="preserve">I1</text>
<text transform="translate(581.5 756.8) scale(0.975 1)" class="sl" xml:space="preserve">2.5m</text>
<text transform="translate(689.9 707.3) scale(0.9133 1)" class="sl" xml:space="preserve">V2</text>
<text transform="translate(688.93 756.8) scale(0.9688 1)" class="sl" xml:space="preserve">1.5</text>
<text transform="translate(441.83 717.1) scale(0.9655 1)" class="sl" xml:space="preserve">.four 1K v(out)</text>
<text transform="translate(432.71 742.6) scale(0.9862 1)" class="sl" xml:space="preserve">.tran 0 0.105 0.1 1µ</text>
<text transform="translate(414.51 760.0) scale(0.9939 1)" class="sl" xml:space="preserve">.options plotwinsize=0</text>
<rect x="8" y="388" width="384" height="334" fill="#d4d0c8"/>
<path d="M9.5 720 V389.5 H390" stroke="#ffffff" stroke-width="1" fill="none"/>
<path d="M8 721.5 H391.5 V388" stroke="#4a4a4a" stroke-width="1" fill="none"/>
<path d="M9 720.5 H390.5 V389" stroke="#8a8a8a" stroke-width="1" fill="none"/>
<path d="M386.5 411 V718 M13 717.5 H387" stroke="#f4f2ee" stroke-width="1" fill="none"/>
<defs><linearGradient id="tg" x1="0" x2="1" y1="0" y2="0"><stop offset="0" stop-color="#0a246a"/><stop offset="1" stop-color="#a6caf0"/></linearGradient></defs>
<rect x="11" y="391" width="376" height="17" fill="url(#tg)"/>
<rect x="13" y="394" width="14" height="10.5" fill="#f4f8ff"/>
<text y="403.6" class="tt" xml:space="preserve"><tspan x="29.8" style="letter-spacing:-0.58px">SPICE </tspan><tspan x="63" style="letter-spacing:-0.11px">Error </tspan><tspan x="92.3" style="letter-spacing:-0.18px">Log: </tspan><tspan x="118.3" style="letter-spacing:0.25px">C:\Data\LTC\</tspan><tspan x="186.5" style="letter-spacing:0.53px">SwCADIII\</tspan><tspan x="243.2" style="letter-spacing:0.44px">homebrew\</tspan><tspan x="305.2" style="letter-spacing:0.12px">tritosineF...</tspan></text>
<rect x="371" y="393" width="15" height="13" fill="#d4d0c8"/>
<path d="M371.5 405.5 V393.5 H385.5" stroke="#ffffff" stroke-width="1" fill="none"/>
<path d="M371 405.5 H385.5 V393" stroke="#404040" stroke-width="1" fill="none"/>
<path d="M374.5 396.5 L381.5 403 M381.5 396.5 L374.5 403" stroke="#000" stroke-width="1.6"/>
<rect x="11" y="410" width="376" height="308" fill="#fff"/>
<path d="M11.5 717 V410.5 H386" stroke="#808080" stroke-width="1" fill="none"/>
<path d="M12.5 716 V411.5 H385" stroke="#404040" stroke-width="1" fill="none"/>
<svg x="13" y="411" width="358" height="291" viewBox="13 411 358 291" overflow="hidden"><text x="14.5" y="424" class="mono" xml:space="preserve">Circuit: * C:\Data\LTC\SwCADIII\homebrew\tritosineFourier.asc</text>
<text x="14.5" y="456" class="mono" xml:space="preserve">Direct Newton iteration for .op point succeeded</text>
<text x="14.5" y="472" class="mono" xml:space="preserve">Fourier components of V(out)</text>
<text x="14.5" y="488" class="mono" xml:space="preserve">DC component:5.30353</text>
<text x="14.5" y="520" class="mono" xml:space="preserve">Harmonic</text>
<text x="159" y="520" class="mono" xml:space="preserve">Frequency</text>
<text x="302" y="520" class="mono" xml:space="preserve"> Fourier</text>
<text x="14.5" y="536" class="mono" xml:space="preserve"> Number</text>
<text x="159" y="536" class="mono" xml:space="preserve">  [Hz]</text>
<text x="302" y="536" class="mono" xml:space="preserve">Component</text>
<text x="14.5" y="552" class="mono" xml:space="preserve">    1</text>
<text x="159" y="552" class="mono" xml:space="preserve">1.000e+03</text>
<text x="302" y="552" class="mono" xml:space="preserve">6.650e-01</text>
<text x="14.5" y="568" class="mono" xml:space="preserve">    2</text>
<text x="159" y="568" class="mono" xml:space="preserve">2.000e+03</text>
<text x="302" y="568" class="mono" xml:space="preserve">9.577e-04</text>
<text x="14.5" y="584" class="mono" xml:space="preserve">    3</text>
<text x="159" y="584" class="mono" xml:space="preserve">3.000e+03</text>
<text x="302" y="584" class="mono" xml:space="preserve">2.520e-02</text>
<text x="14.5" y="600" class="mono" xml:space="preserve">    4</text>
<text x="159" y="600" class="mono" xml:space="preserve">4.000e+03</text>
<text x="302" y="600" class="mono" xml:space="preserve">5.577e-05</text>
<text x="14.5" y="616" class="mono" xml:space="preserve">    5</text>
<text x="159" y="616" class="mono" xml:space="preserve">5.000e+03</text>
<text x="302" y="616" class="mono" xml:space="preserve">5.797e-03</text>
<text x="14.5" y="632" class="mono" xml:space="preserve">    6</text>
<text x="159" y="632" class="mono" xml:space="preserve">6.000e+03</text>
<text x="302" y="632" class="mono" xml:space="preserve">2.554e-05</text>
<text x="14.5" y="648" class="mono" xml:space="preserve">    7</text>
<text x="159" y="648" class="mono" xml:space="preserve">7.000e+03</text>
<text x="302" y="648" class="mono" xml:space="preserve">2.109e-03</text>
<text x="14.5" y="664" class="mono" xml:space="preserve">    8</text>
<text x="159" y="664" class="mono" xml:space="preserve">8.000e+03</text>
<text x="302" y="664" class="mono" xml:space="preserve">1.045e-05</text>
<text x="14.5" y="680" class="mono" xml:space="preserve">    9</text>
<text x="159" y="680" class="mono" xml:space="preserve">9.000e+03</text>
<text x="302" y="680" class="mono" xml:space="preserve">1.378e-03</text>
<text x="14.5" y="696" class="mono" xml:space="preserve">Total Harmonic Distortion: 3.909712%</text></svg>
<defs><pattern id="dith" width="2" height="2" patternUnits="userSpaceOnUse"><rect width="2" height="2" fill="#d4d0c8"/><rect width="1" height="1" fill="#ffffff"/><rect x="1" y="1" width="1" height="1" fill="#ffffff"/></pattern></defs>
<rect x="371" y="411" width="15" height="291" fill="#e6e4df"/>
<rect x="371" y="411" width="15" height="15" fill="#d4d0c8"/>
<path d="M371.5 425 V411.5 H385" stroke="#d4d0c8" stroke-width="1" fill="none"/>
<path d="M372.5 424 V412.5 H384" stroke="#ffffff" stroke-width="1" fill="none"/>
<path d="M371 425.5 H385.5 V411" stroke="#404040" stroke-width="1" fill="none"/>
<path d="M372 424.5 H384.5 V412" stroke="#808080" stroke-width="1" fill="none"/>
<path d="M374.5 422 L382.5 422 L378.5 418 Z" fill="#000"/>
<rect x="371" y="426" width="15" height="127" fill="#d4d0c8"/>
<path d="M371.5 552 V426.5 H385" stroke="#d4d0c8" stroke-width="1" fill="none"/>
<path d="M372.5 551 V427.5 H384" stroke="#ffffff" stroke-width="1" fill="none"/>
<path d="M371 552.5 H385.5 V426" stroke="#404040" stroke-width="1" fill="none"/>
<path d="M372 551.5 H384.5 V427" stroke="#808080" stroke-width="1" fill="none"/>
<rect x="371" y="687" width="15" height="15" fill="#d4d0c8"/>
<path d="M371.5 701 V687.5 H385" stroke="#d4d0c8" stroke-width="1" fill="none"/>
<path d="M372.5 700 V688.5 H384" stroke="#ffffff" stroke-width="1" fill="none"/>
<path d="M371 701.5 H385.5 V687" stroke="#404040" stroke-width="1" fill="none"/>
<path d="M372 700.5 H384.5 V688" stroke="#808080" stroke-width="1" fill="none"/>
<path d="M374.5 692 L382.5 692 L378.5 696 Z" fill="#000"/>
<rect x="13" y="702" width="358" height="15" fill="#e6e4df"/>
<rect x="13" y="702" width="15" height="15" fill="#d4d0c8"/>
<path d="M13.5 716 V702.5 H27" stroke="#d4d0c8" stroke-width="1" fill="none"/>
<path d="M14.5 715 V703.5 H26" stroke="#ffffff" stroke-width="1" fill="none"/>
<path d="M13 716.5 H27.5 V702" stroke="#404040" stroke-width="1" fill="none"/>
<path d="M14 715.5 H26.5 V703" stroke="#808080" stroke-width="1" fill="none"/>
<path d="M18 709.5 L22 705.5 L22 713.5 Z" fill="#000"/>
<rect x="28" y="702" width="145" height="15" fill="#d4d0c8"/>
<path d="M28.5 716 V702.5 H172" stroke="#d4d0c8" stroke-width="1" fill="none"/>
<path d="M29.5 715 V703.5 H171" stroke="#ffffff" stroke-width="1" fill="none"/>
<path d="M28 716.5 H172.5 V702" stroke="#404040" stroke-width="1" fill="none"/>
<path d="M29 715.5 H171.5 V703" stroke="#808080" stroke-width="1" fill="none"/>
<rect x="356" y="702" width="15" height="15" fill="#d4d0c8"/>
<path d="M356.5 716 V702.5 H370" stroke="#d4d0c8" stroke-width="1" fill="none"/>
<path d="M357.5 715 V703.5 H369" stroke="#ffffff" stroke-width="1" fill="none"/>
<path d="M356 716.5 H370.5 V702" stroke="#404040" stroke-width="1" fill="none"/>
<path d="M357 715.5 H369.5 V703" stroke="#808080" stroke-width="1" fill="none"/>
<path d="M365 709.5 L361 705.5 L361 713.5 Z" fill="#000"/>
<rect x="371" y="702" width="15" height="15" fill="#d4d0c8"/>
<path d="M384 704 L373 715 M384 708 L377 715 M384 712 L381 715" stroke="#808080" stroke-width="1.2"/>
<path d="M385 705 L374 716 M385 709 L378 716" stroke="#ffffff" stroke-width="0.8"/>
</svg>
</body></html>
